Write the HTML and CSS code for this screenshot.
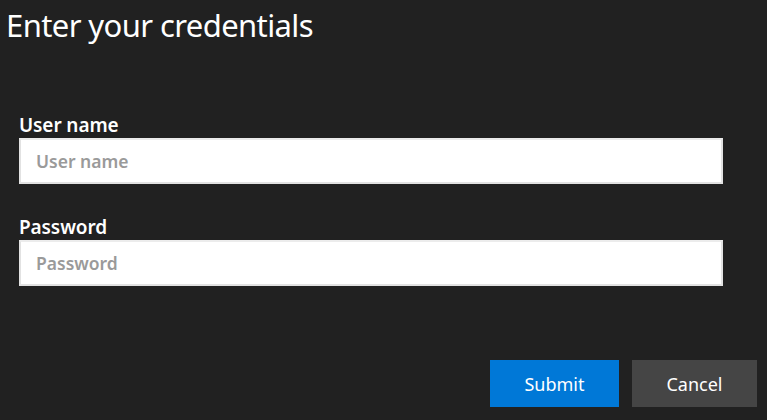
FILE: index.html
```html
<!DOCTYPE html>
<html lang="en">
<head>
    <meta charset="UTF-8">
    <meta name="viewport" content="width=device-width, initial-scale=1.0">
    <title>Credentials</title>
    <link rel="stylesheet" href="styles.css">
</head>
<body>
    <div class="dialog">
        <h1 class="title">Enter your credentials</h1>
        <form class="fields">
            <label class="field">
                <span class="label">User name</span>
                <input type="text" class="input" placeholder="User name">
            </label>
            <label class="field">
                <span class="label">Password</span>
                <input type="password" class="input" placeholder="Password">
            </label>
        </form>
        <div class="actions">
            <button class="btn primary">Submit</button>
            <button class="btn">Cancel</button>
        </div>
    </div>
</body>
</html>
```

FILE: styles.css
```css
html, body {
    margin: 0;
    height: 100%;
}
body {
    background: #212121;
    color: #fff;
    font-family: "Noto Sans", "Open Sans", sans-serif;
}
.dialog {
    height: 100%;
    display: flex;
    flex-direction: column;
    box-sizing: border-box;
    padding: 0 10px 13px 0;
}
.title {
    margin: 0;
    padding: 5px 0 0 6px;
    font-size: 31px;
    font-weight: 400;
    line-height: 40px;
    letter-spacing: -0.6px;
}
.fields {
    margin-top: 67px;
    padding-left: 19px;
    display: flex;
    flex-direction: column;
    gap: 30px;
}
.field {
    display: flex;
    flex-direction: column;
}
.label {
    font-size: 19px;
    font-weight: 600;
    line-height: 26px;
    letter-spacing: -0.1px;
}
.input {
    width: 704px;
    height: 46px;
    box-sizing: border-box;
    margin: 0;
    border: 2px solid #e2e2e2;
    border-top-color: #ececec;
    background: #fff;
    padding: 0 15px;
    font-family: inherit;
    font-size: 17.5px;
    font-weight: 600;
    color: #222;
    outline: none;
}
.input::placeholder {
    color: #9a9a9a;
}
.actions {
    margin-top: auto;
    display: flex;
    justify-content: flex-end;
    gap: 13px;
}
.btn {
    width: 125px;
    height: 47px;
    border: none;
    background: #454545;
    color: #fff;
    font-family: inherit;
    font-size: 18px;
    cursor: pointer;
}
.btn.primary {
    width: 129px;
    background: #0078d7;
}
```
